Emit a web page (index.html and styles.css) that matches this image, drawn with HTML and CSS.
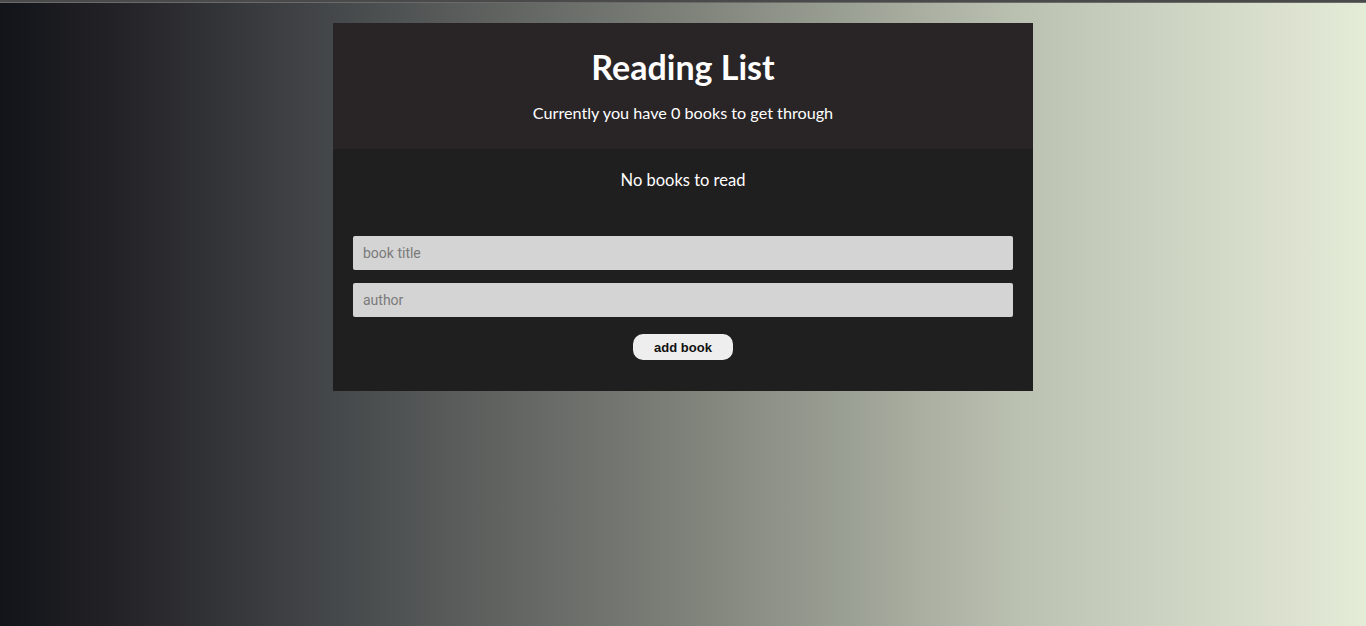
FILE: index.html
```html
<!DOCTYPE html>
<html lang="en">
<head>
<meta charset="utf-8">
<title>Reading List</title>
<link rel="stylesheet" href="styles.css">
</head>
<body>
<div class="top-bar"></div>
<div class="app">
  <header class="navbar">
    <h1>Reading List</h1>
    <p>Currently you have 0 books to get through</p>
  </header>
  <div class="empty">No books to read</div>
  <form class="book-form">
    <input type="text" placeholder="book title">
    <input type="text" placeholder="author">
    <button type="button">add book</button>
  </form>
</div>
</body>
</html>
```

FILE: styles.css
```css
html, body {
  margin: 0;
  padding: 0;
  height: 100%;
}
body {
  background: linear-gradient(to right, #121419 0%, #222126 8%, #444749 24%, #7d8179 50%, #bcc2b2 75%, #e4ebd7 100%);
  font-family: Lato, "Noto Sans", sans-serif;
  color: #fff;
}
.top-bar {
  height: 3px;
  background: linear-gradient(to bottom, #4a4a4a 0, #4a4a4a 2px, #6a6a6a 2px);
}
.app {
  width: 700px;
  margin: 20px auto 0;
  background: #1f1f1f;
}
.navbar {
  background: #292526;
  padding: 24px 20px;
  text-align: center;
}
.navbar h1 {
  margin: 0;
  font-size: 34px;
  line-height: 40px;
  font-weight: 700;
}
.navbar p {
  margin: 14px 0 0;
  font-size: 16.2px;
  line-height: 24px;
}
.empty {
  padding: 19px 0;
  text-align: center;
  font-size: 16.5px;
  line-height: 24px;
}
.book-form {
  display: flex;
  flex-direction: column;
  align-items: center;
  gap: 13px;
  padding: 25px 20px 31px;
}
.book-form input {
  box-sizing: border-box;
  width: 100%;
  height: 34px;
  border: none;
  border-radius: 2px;
  background: #d4d4d4;
  padding: 0 10px;
  font-family: Roboto, Arial, sans-serif;
  font-size: 14px;
  color: #333;
  outline: none;
}
.book-form input::placeholder {
  color: #7a7a7a;
}
.book-form button {
  margin-top: 4px;
  width: 100px;
  height: 26px;
  border: none;
  border-radius: 10px;
  background: #eeeeee;
  color: #111;
  font-family: "Liberation Sans", Arial, sans-serif;
  font-weight: 700;
  font-size: 13px;
  cursor: pointer;
}
```
